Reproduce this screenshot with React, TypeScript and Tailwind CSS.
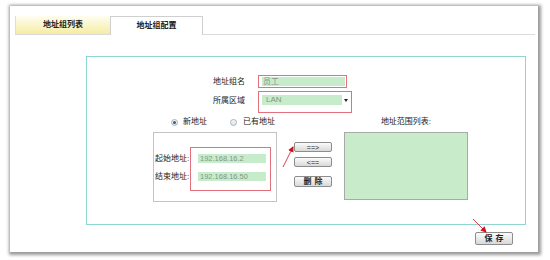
import React from "react";

const font = { fontFamily: '"Liberation Sans", "Noto Sans CJK SC", sans-serif' };

function Radio({ checked }: { checked?: boolean }) {
  return (
    <div className="w-[7px] h-[7px] rounded-full border border-[#a9b3bd] bg-gradient-to-b from-[#f4f6f8] to-[#dfe4e9] flex items-center justify-center">
      {checked ? <div className="w-[3px] h-[3px] rounded-full bg-[#3b5b86]" /> : null}
    </div>
  );
}

function Btn({ children, className = "" }: { children: React.ReactNode; className?: string }) {
  return (
    <div
      className={
        "w-[38px] flex items-center justify-center rounded-[2px] border border-[#8d8d8d] bg-gradient-to-b from-[#fbfbfb] to-[#d9d9d9] text-[7px] leading-none text-[#222] " +
        className
      }
    >
      {children}
    </div>
  );
}

export default function App() {
  return (
    <div className="relative w-[550px] h-[260px] bg-white overflow-hidden" style={font}>
      <div className="ml-[10px] mt-[6px] w-[528px] h-[246px] bg-white shadow-[1px_1px_3px_2px_#9a9a9a] flex flex-col">
        {/* Tabs */}
        <div className="mt-[10px] ml-[5px] mr-[3px] flex items-end border-b border-[#dadada]">
          <div className="w-[95px] h-[18px] flex items-center justify-center bg-gradient-to-b from-[#fffdf0] to-[#f6eca2] border-l border-[#e6e0b8] text-[8px] font-bold text-[#222]">
            地址组列表
          </div>
          <div className="w-[93px] h-[19px] -mb-px flex items-center justify-center bg-white border border-b-0 border-[#cfcfcf] text-[8px] font-bold text-[#222]">
            地址组配置
          </div>
        </div>

        {/* Teal box */}
        <div className="ml-[76px] mt-[21px] w-[440px] h-[169px] border border-[#8ed6d0] flex flex-col">
          {/* Row 1 */}
          <div className="mt-[18px] flex items-center">
            <div className="w-[171px] pr-[13px] text-right text-[8px] text-[#222]">地址组名</div>
            <div className="w-[89px] h-[13px] border border-[#e3707a] p-[1px] pl-[3px]">
              <div className="w-[83px] h-[9px] bg-[#c6eccb] text-[8px] leading-[9px] pl-[1px] text-[#859585]">员工</div>
            </div>
          </div>
          {/* Row 2 */}
          <div className="mt-[3px] flex items-start">
            <div className="w-[171px] pr-[13px] pt-[5px] text-right text-[8px] leading-[10px] text-[#222]">所属区域</div>
            <div className="w-[94px] h-[22px] border border-[#e3707a] pt-[3px] pl-[3px]">
              <div className="w-[88px] h-[10px] flex items-center bg-white">
                <div className="w-[80px] h-[10px] bg-[#c6eccb] text-[8px] leading-[10px] pl-[4px] text-[#859585]">LAN</div>
                <div className="flex-1 flex items-center justify-center">
                  <div className="w-0 h-0 border-l-[2px] border-r-[2px] border-t-[3px] border-l-transparent border-r-transparent border-t-[#222]" />
                </div>
              </div>
            </div>
          </div>

          {/* Radio row */}
          <div className="mt-[4px] ml-[66px] flex items-center h-[10px]">
            <div className="w-[191px] flex items-center">
              <div className="ml-[18px]"><Radio checked /></div>
              <div className="ml-[5px] text-[8px] text-[#222]">新地址</div>
              <div className="ml-[23px]"><Radio /></div>
              <div className="ml-[6px] text-[8px] text-[#222]">已有地址</div>
            </div>
            <div className="w-[124px] text-center text-[8px] text-[#222]">地址范围列表:</div>
          </div>

          {/* Boxes row */}
          <div className="mt-[5px] ml-[66px] flex items-start">
            <div className="w-[124px] h-[70px] border border-[#c4c4c4] pt-[14px] pl-[1px] flex">
              <div className="w-[35px] pt-[7px] flex flex-col gap-[9px] text-[8px] text-[#222]">
                <div className="h-[9px] leading-[9px] whitespace-nowrap">起始地址:</div>
                <div className="h-[9px] leading-[9px] whitespace-nowrap">结束地址:</div>
              </div>
              <div className="w-[81px] h-[44px] border border-[#e3707a] pt-[6px] pl-[7px] flex flex-col gap-[9px]">
                <div className="w-[68px] h-[9px] bg-[#c6eccb] text-[7.5px] leading-[9px] pl-[2px] text-[#859585]">192.168.16.2</div>
                <div className="w-[68px] h-[9px] bg-[#c6eccb] text-[7.5px] leading-[9px] pl-[2px] text-[#859585]">192.168.16.50</div>
              </div>
            </div>
            <div className="ml-[17px] pt-[10px] flex flex-col">
              <Btn className="h-[10px]">==&gt;</Btn>
              <Btn className="h-[10px] mt-[5px]">&lt;==</Btn>
              <Btn className="h-[11px] mt-[9px] font-bold text-[8px] gap-[3px]">
                <span>删</span>
                <span>除</span>
              </Btn>
            </div>
            <div className="ml-[12px] w-[124px] h-[68px] border border-[#a9a9a9] bg-[#c8ecc9]" />
          </div>
        </div>

        {/* Save */}
        <div className="mt-[7px] flex justify-end pr-[25px]">
          <Btn className="h-[13px] font-bold text-[8px] gap-[3px]">
            <span>保</span>
            <span>存</span>
          </Btn>
        </div>
      </div>

      {/* Red arrows overlay */}
      <svg className="absolute left-0 top-0 pointer-events-none" width="550" height="260">
        <defs>
          <marker id="ah" markerWidth="6" markerHeight="6" refX="5" refY="3" orient="auto" markerUnits="userSpaceOnUse">
            <path d="M0,0 L6,3 L0,6 Z" fill="#d0121e" />
          </marker>
        </defs>
        <line x1="283" y1="167" x2="293" y2="147" stroke="#d0121e" strokeWidth="0.8" markerEnd="url(#ah)" />
        <line x1="473" y1="219" x2="486" y2="232" stroke="#d0121e" strokeWidth="0.8" markerEnd="url(#ah)" />
      </svg>
    </div>
  );
}
